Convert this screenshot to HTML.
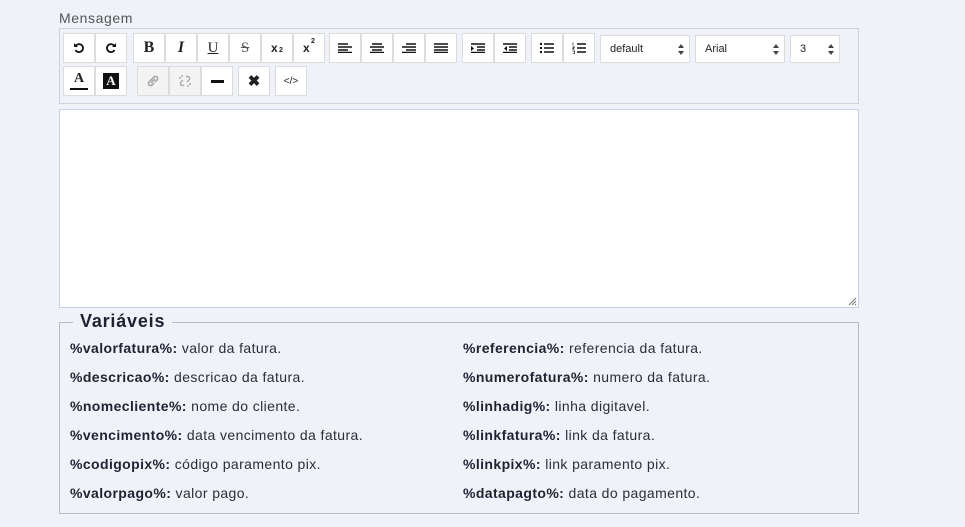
<!DOCTYPE html>
<html><head><meta charset="utf-8"><style>
*{box-sizing:border-box;margin:0;padding:0}
body{width:965px;height:527px;background:#eff2f8;font-family:"Liberation Sans",sans-serif;position:relative;overflow:hidden;color:#2b2d3a}
.abs{position:absolute}
.lbl{left:59px;top:10px;font-size:14px;color:#555;letter-spacing:0.6px}
.tb{left:59px;top:28px;width:800px;height:76px;border:1px solid #ccd3dd;background:#eff2f8}
.b{position:absolute;height:30px;width:32px;background:#fff;border:1px solid #dcdcdc;display:flex;align-items:center;justify-content:center;font-size:14px;color:#222}
.b.dis{background:#f3f3f3}
.sel{position:absolute;top:35px;height:28px;background:#fff;border:1px solid #dcdcdc;font-size:11px;padding-left:9px;line-height:26px;color:#222}
.sel:after{content:"";position:absolute;right:5px;top:8px;width:0;height:0;border-left:3.5px solid transparent;border-right:3.5px solid transparent;border-bottom:4px solid #444}
.sel:before{content:"";position:absolute;right:5px;top:15px;width:0;height:0;border-left:3.5px solid transparent;border-right:3.5px solid transparent;border-top:4px solid #444}
.ed{left:59px;top:109px;width:800px;height:199px;background:#fff;border:1px solid #c7d2e0}
.fs{left:59px;top:322px;width:800px;height:192px;border:1px solid #bbb}
.lg{left:73px;top:311px;padding:0 7px;background:#eff2f8;font-size:18px;font-weight:bold;color:#1f2233;letter-spacing:0.8px}
.v{position:absolute;font-size:14px;color:#2b2d3a;white-space:nowrap;letter-spacing:0.4px}
.v b{color:#1f2233}
.xs{font-weight:bold;font-size:12px;position:relative}
.xs i{font-style:normal;font-size:7px;position:absolute;left:8px}
</style></head><body>
<div class="abs lbl">Mensagem</div>
<div class="abs tb"></div>
<div class="b" style="left:63px;top:33px"><svg width="12" height="12" viewBox="0 0 12 12"><path d="M3 3.5A4 4 0 1 1 2.5 8" fill="none" stroke="#111" stroke-width="1.8"/><path d="M1 1v4h4z" fill="#111"/></svg></div>
<div class="b" style="left:95px;top:33px"><svg width="12" height="12" viewBox="0 0 12 12"><path d="M9 3.5A4 4 0 1 0 9.5 8" fill="none" stroke="#111" stroke-width="1.8"/><path d="M11 1v4H7z" fill="#111"/></svg></div>
<div class="b" style="left:133px;top:33px;font-family:'Liberation Serif';font-weight:bold;font-size:16px">B</div>
<div class="b" style="left:165px;top:33px;font-family:'Liberation Serif';font-style:italic;font-weight:bold;font-size:16px">I</div>
<div class="b" style="left:197px;top:33px;font-family:'Liberation Serif';text-decoration:underline;font-size:15px">U</div>
<div class="b" style="left:229px;top:33px;font-family:'Liberation Serif';text-decoration:line-through;font-size:15px;color:#555">S</div>
<div class="b" style="left:261px;top:33px"><span class="xs" style="width:12px">x<i style="top:6px">2</i></span></div>
<div class="b" style="left:293px;top:33px"><span class="xs" style="width:12px">x<i style="top:-3px">2</i></span></div>
<div class="b" style="left:329px;top:33px"><svg width="14" height="10"><path d="M0 1h10M0 4h14M0 7h10M0 9.5h14" stroke="#111" stroke-width="1.4"/></svg></div>
<div class="b" style="left:361px;top:33px"><svg width="14" height="10"><path d="M2 1h10M0 4h14M2 7h10M0 9.5h14" stroke="#111" stroke-width="1.4"/></svg></div>
<div class="b" style="left:393px;top:33px"><svg width="14" height="10"><path d="M4 1h10M0 4h14M4 7h10M0 9.5h14" stroke="#111" stroke-width="1.4"/></svg></div>
<div class="b" style="left:425px;top:33px"><svg width="14" height="10"><path d="M0 1h14M0 4h14M0 7h14M0 9.5h14" stroke="#111" stroke-width="1.4"/></svg></div>
<div class="b" style="left:462px;top:33px"><svg width="14" height="10"><path d="M0 1h14M6 4h8M6 7h8M0 9.5h14" stroke="#111" stroke-width="1.4"/><path d="M0 3l3 2.5L0 8z" fill="#111"/></svg></div>
<div class="b" style="left:494px;top:33px"><svg width="14" height="10"><path d="M0 1h14M6 4h8M6 7h8M0 9.5h14" stroke="#111" stroke-width="1.4"/><path d="M4 3L1 5.5L4 8z" fill="#111"/></svg></div>
<div class="b" style="left:531px;top:33px"><svg width="14" height="10"><path d="M4 1h10M4 5h10M4 9h10" stroke="#111" stroke-width="1.4"/><path d="M0 0h2v2H0zM0 4h2v2H0zM0 8h2v2H0z" fill="#111"/></svg></div>
<div class="b" style="left:563px;top:33px"><svg width="14" height="12"><path d="M5 2h9M5 6h9M5 10h9" stroke="#111" stroke-width="1.4"/><path d="M1 0.5v3M0.5 5h2l-2 2h2M0.5 9h2v3h-2" stroke="#111" stroke-width="0.7" fill="none"/></svg></div>
<div class="sel" style="left:600px;width:90px">default</div>
<div class="sel" style="left:695px;width:90px">Arial</div>
<div class="sel" style="left:790px;width:50px">3</div>
<div class="b" style="left:63px;top:66px;flex-direction:column"><span style="font-family:'Liberation Serif';font-weight:bold;font-size:14px;line-height:14px">A</span><span style="display:block;width:18px;height:2px;background:#111;margin-top:2px"></span></div>
<div class="b" style="left:95px;top:66px"><span style="background:#111;color:#fff;font-family:'Liberation Serif';font-weight:bold;font-size:13px;width:16px;height:16px;display:flex;align-items:center;justify-content:center">A</span></div>
<div class="b dis" style="left:137px;top:66px"><svg width="14" height="14"><path d="M3 8l5-5a2 2 0 0 1 3 3L9 8M5 6l-2 2a2 2 0 0 0 3 3l2-2M5 9l4-4" stroke="#aaa" stroke-width="1.6" fill="none"/></svg></div>
<div class="b dis" style="left:169px;top:66px"><svg width="14" height="14"><path d="M8 3a2 2 0 0 1 3 3L9 8M5 6l-2 2a2 2 0 0 0 3 3M1 4h2M4 1v2M10 13v-2M13 10h-2" stroke="#aaa" stroke-width="1.4" fill="none"/></svg></div>
<div class="b" style="left:201px;top:66px"><span style="width:13px;height:3px;background:#111;display:block"></span></div>
<div class="b" style="left:238px;top:66px;font-weight:bold;font-size:15px">✖</div>
<div class="b" style="left:275px;top:66px;font-size:10px">&lt;/&gt;</div>
<div class="abs ed"></div>
<svg class="abs" style="left:848px;top:297px" width="9" height="9"><path d="M1 8L8 1M4 8L8 4M7 8L8 7" stroke="#777" stroke-width="1"/></svg>
<div class="abs fs"></div>
<div class="abs lg">Variáveis</div>
<div class="v" style="left:70px;top:340px"><b>%valorfatura%:</b> valor da fatura.</div>
<div class="v" style="left:70px;top:369px"><b>%descricao%:</b> descricao da fatura.</div>
<div class="v" style="left:70px;top:398px"><b>%nomecliente%:</b> nome do cliente.</div>
<div class="v" style="left:70px;top:427px"><b>%vencimento%:</b> data vencimento da fatura.</div>
<div class="v" style="left:70px;top:456px"><b>%codigopix%:</b> código paramento pix.</div>
<div class="v" style="left:70px;top:485px"><b>%valorpago%:</b> valor pago.</div>
<div class="v" style="left:463px;top:340px"><b>%referencia%:</b> referencia da fatura.</div>
<div class="v" style="left:463px;top:369px"><b>%numerofatura%:</b> numero da fatura.</div>
<div class="v" style="left:463px;top:398px"><b>%linhadig%:</b> linha digitavel.</div>
<div class="v" style="left:463px;top:427px"><b>%linkfatura%:</b> link da fatura.</div>
<div class="v" style="left:463px;top:456px"><b>%linkpix%:</b> link paramento pix.</div>
<div class="v" style="left:463px;top:485px"><b>%datapagto%:</b> data do pagamento.</div>
</body></html>
